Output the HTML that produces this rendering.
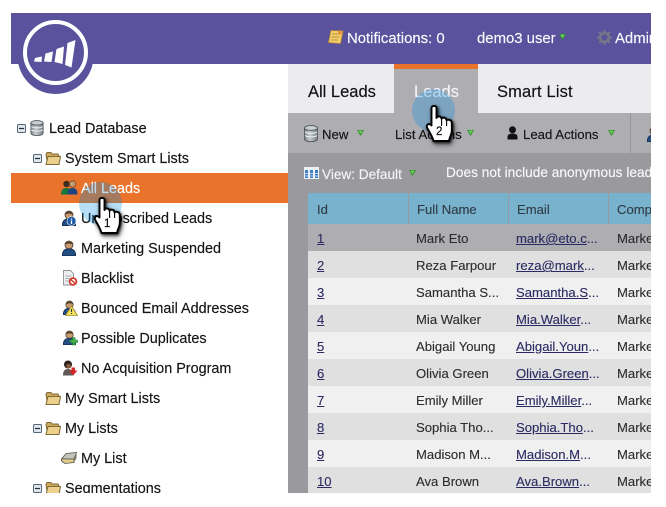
<!DOCTYPE html>
<html><head><meta charset="utf-8"><title>Leads</title>
<style>
html,body{margin:0;padding:0;background:#fff}
body{width:666px;height:507px;overflow:hidden;position:relative;font-family:"Liberation Sans",sans-serif}
#w{position:absolute;left:0;top:0;width:651px;height:493px;overflow:hidden}
.b{position:absolute}
.t{position:absolute;line-height:20px;height:20px;white-space:nowrap;-webkit-text-stroke:.15px currentColor}
.n{font-size:14.4px;color:#141414}
.h{font-size:14.9px;color:#fbfafe}
.tab{font-size:16.5px;color:#111}
.tb{font-size:13.2px;color:#141414}
.r{position:absolute;left:308px;width:343px;height:27px;font-size:13.1px;color:#2c2c2c;-webkit-text-stroke:.12px currentColor}
.r span{position:absolute;top:5px;line-height:20px;white-space:nowrap}
.r .i{left:9px}
.r .f{left:108px}
.r .e{left:208px;color:#2b2a62}
.r .c{left:309px}
.r a{color:#2b2a62;text-decoration:underline}
.th{position:absolute;top:193px;height:31px;background:#78b2cd;font-size:13.1px;color:#2f3a44;line-height:33px;-webkit-text-stroke:.12px currentColor}
svg{position:absolute;overflow:visible}
.hand{filter:drop-shadow(1px 1px 1px rgba(0,0,0,.7)) drop-shadow(1px 2px 2px rgba(0,0,0,.55))}
</style></head><body>
<svg width="0" height="0" style="position:absolute">
<defs>
<linearGradient id="dbg" x1="0" x2="1" y1="0" y2="0"><stop offset="0" stop-color="#7f878c"/><stop offset=".4" stop-color="#c4c9cc"/><stop offset="1" stop-color="#7a8287"/></linearGradient>
<symbol id="db" viewBox="0 0 14 17"><path d="M.5 3v11c0 1.600 2.900 2.600 6.500 2.600s6.500-1 6.500-2.600V3z" fill="url(#dbg)" stroke="#4f585d" stroke-width=".9"/><ellipse cx="7" cy="3" rx="6.500" ry="2.400" fill="#c9ced0" stroke="#4f585d" stroke-width=".9"/><path d="M1 7c2 1.800 10 1.800 12 0M1 10.500c2 1.800 10 1.800 12 0" fill="none" stroke="#f0f3f3" stroke-width="1"/></symbol>
<symbol id="folder" viewBox="0 0 16 16"><path d="M1 4.500 2 2.500h4l1 1.500h6l1 2v8H2.500z" fill="#cfa95a" stroke="#7d6a3c" stroke-width="1"/><path d="M1 14.500 3 6.500h12.500l-1.500 8z" fill="#ecd08c" stroke="#7d6a3c" stroke-width="1"/></symbol>
<symbol id="minus" viewBox="0 0 9 9"><rect x=".5" y=".5" width="8" height="8" rx="1" fill="#dfe6ec" stroke="#56687a"/><path d="M2 4.500h5" stroke="#1e2e3e" stroke-width="1.200"/></symbol>
<symbol id="arrow" viewBox="0 0 7 6"><path d="M0 0h7L3.500 6z" fill="#2f8f2a"/><path d="M1.200 .6h4.600L3.500 4z" fill="#6fd060"/></symbol>
<symbol id="person" viewBox="0 0 14 16"><circle cx="7" cy="5" r="4" fill="#c99a70" stroke="#4d3a2a" stroke-width=".8"/><path d="M3 4.800C3.200.6 10.800.6 11 4.800 8.500 3 5.500 3 3 4.800z" fill="#4f3c2a"/><path d="M.3 15.800c0-4.800 2.600-7 6.700-7s6.700 2.200 6.700 7z" fill="#234f85" stroke="#12294a" stroke-width=".8"/></symbol>
<symbol id="hand" viewBox="-9 -2 30 40"><path d="M-2.500 2C-2.500-.8 2.500-.8 2.500 2V12C3.200 9.800 7 9.800 7.600 12.800 8.300 11 12 11.200 12.600 14.500 13.500 13 17.800 13.600 17.800 17V25C17.800 29 15.500 31 15 35H-.5C-1.500 31-3.500 27.500-6.500 22.500-8.500 19.300-5.500 16.200-2.500 19.500z" fill="#fff" stroke="#000" stroke-width="1.900" stroke-linejoin="round"/><path d="M7.600 13V20M12.600 14.500V20" stroke="#000" stroke-width="1.100" fill="none"/></symbol>
</defs></svg>

<div id="w">
<!-- header -->
<div class="b" style="left:11px;top:13px;width:640px;height:51px;background:#5a529d"></div>
<svg style="left:0;top:0" width="110" height="100" viewBox="0 0 110 100">
<circle cx="55.500" cy="56" r="38" fill="#5a529d"/>
<circle cx="55.500" cy="52.500" r="30.500" fill="#5a529d" stroke="#fff" stroke-width="4"/>
<g fill="#fff"><path d="M35 58 42 56.500 41.500 62 34 61.500z"/><path d="M45.500 53.500 53 51.500 51.500 62 44 61.500z"/><path d="M56.500 49 64 46.500 62.500 64 54.500 62z"/><path d="M67.500 43 75.500 40 71.500 67.500 65 65z"/></g>
</svg>
<svg style="left:328px;top:29px" width="16" height="16" viewBox="0 0 16 16"><path d="M3 1.500 15 2 12.500 14.500 .5 13.500z" fill="#f2cf6c" stroke="#b98a2c" stroke-width=".8"/><path d="M4 5h8M3.500 8h8M3 11h7" stroke="#a9822e" stroke-width=".8"/><circle cx="12" cy="3.500" r="2" fill="#e8913a"/></svg>
<div class="t h" style="left:347px;top:29px">Notifications: 0</div>
<div class="t h" style="left:477px;top:29px">demo3 user</div>
<svg style="left:559px;top:34px" width="7" height="6"><use href="#arrow" width="7" height="6"/></svg>
<svg style="left:597px;top:30px" width="15" height="15" viewBox="0 0 15 15"><circle cx="7.500" cy="7.500" r="4.300" fill="none" stroke="#77748a" stroke-width="2.600"/><path d="M7.500 0v15M0 7.500h15M2.200 2.200 12.800 12.800M12.800 2.200 2.200 12.800" stroke="#77748a" stroke-width="2.200" stroke-dasharray="2.600 9.800"/></svg>
<div class="t h" style="left:615px;top:29px">Admin</div>

<!-- tabs -->
<div class="b" style="left:288px;top:64px;width:363px;height:49px;background:#ecebf0"></div>
<div class="b" style="left:394px;top:64px;width:84px;height:49px;background:#aeadb2"></div>
<div class="b" style="left:394px;top:64px;width:84px;height:5px;background:#e9732a"></div>
<div class="t tab" style="left:308px;top:82px">All Leads</div>
<div class="t tab" style="left:414px;top:82px;color:#f4f4f6">Leads</div>
<div class="t tab" style="left:497px;top:82px;letter-spacing:.15px">Smart List</div>

<!-- toolbar -->
<div class="b" style="left:288px;top:113px;width:363px;height:40px;background:#aeadb2"></div>
<div class="b" style="left:630px;top:113px;width:1px;height:40px;background:#98979c"></div>
<div class="b" style="left:288px;top:153px;width:363px;height:340px;background:#9a999e"></div>
<svg style="left:304px;top:125px" width="14" height="17"><use href="#db" width="14" height="17"/></svg>
<div class="t tb" style="left:322px;top:125px">New</div>
<svg style="left:357px;top:130px" width="7" height="6"><use href="#arrow" width="7" height="6"/></svg>
<div class="t tb" style="left:395px;top:125px">List Actions</div>
<svg style="left:467px;top:130px" width="7" height="6"><use href="#arrow" width="7" height="6"/></svg>
<svg style="left:507px;top:126px" width="11" height="14" viewBox="0 0 11 14"><circle cx="5.500" cy="3.800" r="3.500" fill="#111"/><path d="M.5 13.500v-2.500c0-2.500 2-3.500 5-3.500s5 1 5 3.500v2.500z" fill="#111"/></svg>
<div class="t tb" style="left:523px;top:125px">Lead Actions</div>
<svg style="left:608px;top:130px" width="7" height="6"><use href="#arrow" width="7" height="6"/></svg>
<svg style="left:647px;top:126px" width="14" height="16"><use href="#person" width="14" height="16"/></svg>

<!-- view bar -->
<svg style="left:304px;top:167px" width="15" height="12" viewBox="0 0 15 12"><rect width="15" height="12" fill="#eef2f6"/><path d="M1 3h3v8H1zM6 3h3v8H6zM11 3h3v8h-3z" fill="#3f7fc4"/><path d="M0 6.500h15M0 9h15" stroke="#e8eef4" stroke-width=".7"/></svg>
<div class="t tb" style="left:322px;top:164px;color:#f4f4f6;font-size:13.600px;top:165px">View: Default</div>
<svg style="left:409px;top:170px" width="7" height="6"><use href="#arrow" width="7" height="6"/></svg>
<div class="t tb" style="left:446px;top:163px;color:#f8f8f8;font-size:13.700px">Does not include anonymous leads</div>

<!-- table header -->
<div class="th" style="left:308px;width:100px"><span style="margin-left:9px">Id</span></div>
<div class="th" style="left:409px;width:99px"><span style="margin-left:8px">Full Name</span></div>
<div class="th" style="left:509px;width:99px"><span style="margin-left:8px">Email</span></div>
<div class="th" style="left:609px;width:42px"><span style="margin-left:8px">Company</span></div>

<!-- rows -->
<div class="r" style="top:224px;background:#aeadb2"><span class="i"><a>1</a></span><span class="f">Mark Eto</span><span class="e"><a>mark@eto.c</a>...</span><span class="c">Marketo</span></div>
<div class="r" style="top:251px;background:#e0e0e0"><span class="i"><a>2</a></span><span class="f">Reza Farpour</span><span class="e"><a>reza@mark</a>...</span><span class="c">Marketo</span></div>
<div class="r" style="top:278px;background:#f0f0f0"><span class="i"><a>3</a></span><span class="f">Samantha S...</span><span class="e"><a>Samantha.S</a>...</span><span class="c">Marketo</span></div>
<div class="r" style="top:305px;background:#e0e0e0"><span class="i"><a>4</a></span><span class="f">Mia Walker</span><span class="e"><a>Mia.Walker</a>...</span><span class="c">Marketo</span></div>
<div class="r" style="top:332px;background:#f0f0f0"><span class="i"><a>5</a></span><span class="f">Abigail Young</span><span class="e"><a>Abigail.Youn</a>...</span><span class="c">Marketo</span></div>
<div class="r" style="top:359px;background:#e0e0e0"><span class="i"><a>6</a></span><span class="f">Olivia Green</span><span class="e"><a>Olivia.Green</a>...</span><span class="c">Marketo</span></div>
<div class="r" style="top:386px;background:#f0f0f0"><span class="i"><a>7</a></span><span class="f">Emily Miller</span><span class="e"><a>Emily.Miller</a>...</span><span class="c">Marketo</span></div>
<div class="r" style="top:413px;background:#e0e0e0"><span class="i"><a>8</a></span><span class="f">Sophia Tho...</span><span class="e"><a>Sophia.Tho</a>...</span><span class="c">Marketo</span></div>
<div class="r" style="top:440px;background:#f0f0f0"><span class="i"><a>9</a></span><span class="f">Madison M...</span><span class="e"><a>Madison.M</a>...</span><span class="c">Marketo</span></div>
<div class="r" style="top:467px;background:#e0e0e0"><span class="i"><a>10</a></span><span class="f">Ava Brown</span><span class="e"><a>Ava.Brown</a>...</span><span class="c">Marketo</span></div>

<!-- tree -->
<div class="b" style="left:11px;top:173px;width:277px;height:30px;background:#e9732a"></div>
<svg style="left:17px;top:124px" width="9" height="9"><use href="#minus" width="9" height="9"/></svg>
<svg style="left:30px;top:120px" width="14" height="16"><use href="#db" width="14" height="16"/></svg>
<div class="t n" style="left:49px;top:119px">Lead Database</div>
<svg style="left:33px;top:154px" width="9" height="9"><use href="#minus" width="9" height="9"/></svg>
<svg style="left:45px;top:150px" width="16" height="16"><use href="#folder" width="16" height="16"/></svg>
<div class="t n" style="left:65px;top:149px">System Smart Lists</div>

<svg style="left:61px;top:180px" width="17" height="15" viewBox="0 0 17 15"><circle cx="5.500" cy="4" r="3.200" fill="#3d2c20"/><circle cx="11.500" cy="4" r="3.200" fill="#c99a70" stroke="#4d3a2a" stroke-width=".6"/><path d="M0 14.500c0-5 2.500-6.500 5.500-6.500s5.500 1.500 5.500 6.500z" fill="#14763f"/><path d="M6.500 14.500c0-5 2-6.500 5-6.500s5 1.500 5 6.500z" fill="#1a4580"/></svg>
<div class="t n" style="left:81px;top:179px;color:#fff">All Leads</div>

<svg style="left:62px;top:210px" width="15" height="16" viewBox="0 0 15 16"><use href="#person" width="14" height="16"/><circle cx="9.500" cy="11" r="4.500" fill="#1d5aa8" stroke="#fff" stroke-width=".6"/><path d="M9.500 8.500v1.200M9.500 10.500V14" stroke="#fff" stroke-width="1.300"/></svg>
<div class="t n" style="left:81px;top:209px">Unsubscribed Leads</div>

<svg style="left:62px;top:240px" width="15" height="16"><use href="#person" width="14" height="16"/></svg>
<div class="t n" style="left:81px;top:239px">Marketing Suspended</div>

<svg style="left:63px;top:270px" width="15" height="16" viewBox="0 0 15 16"><path d="M.5.500h7l3 3V15H.5z" fill="#eceef0" stroke="#8e9296" stroke-width=".9"/><path d="M2.500 6h6M2.500 8.500h4M2.500 11h3" stroke="#a8acb0" stroke-width=".9"/><circle cx="10" cy="11.500" r="3.400" fill="#fff" stroke="#d23a2c" stroke-width="1.800"/><path d="M7.800 9.500 12.200 13.500" stroke="#d23a2c" stroke-width="1.500"/></svg>
<div class="t n" style="left:81px;top:269px">Blacklist</div>

<svg style="left:63px;top:300px" width="15" height="16" viewBox="0 0 15 16"><use href="#person" width="13" height="15"/><path d="M8.500 6 14.500 15.500H2.500z" fill="#f5e15c" stroke="#9c8c34" stroke-width=".8"/><path d="M8.500 9v3M8.500 13v1" stroke="#333" stroke-width="1.100"/></svg>
<div class="t n" style="left:81px;top:299px">Bounced Email Addresses</div>

<svg style="left:63px;top:330px" width="15" height="16" viewBox="0 0 15 16"><use href="#person" width="13" height="15"/><path d="M9.500 7.500h2.500v2.500h2.500v2.500H12V15H9.500v-2.500H7V10h2.500z" fill="#3fb54a" stroke="#1e7a2c" stroke-width=".6"/></svg>
<div class="t n" style="left:81px;top:329px">Possible Duplicates</div>

<svg style="left:62px;top:360px" width="16" height="16" viewBox="0 0 16 16"><circle cx="6" cy="4.500" r="4" fill="#2e221d"/><circle cx="6.500" cy="6" r="2.300" fill="#8a5a3c"/><path d="M1 15.500c0-5 2-6.500 5-6.500s5 1.500 5 6.500z" fill="#5f5a58"/><path d="M9.500 7.500h3.500v3h2.500l-4.300 5-4.200-5h2.500z" fill="#d4282a"/></svg>
<div class="t n" style="left:81px;top:359px">No Acquisition Program</div>

<svg style="left:45px;top:390px" width="16" height="16"><use href="#folder" width="16" height="16"/></svg>
<div class="t n" style="left:65px;top:389px">My Smart Lists</div>

<svg style="left:33px;top:424px" width="9" height="9"><use href="#minus" width="9" height="9"/></svg>
<svg style="left:45px;top:420px" width="16" height="16"><use href="#folder" width="16" height="16"/></svg>
<div class="t n" style="left:65px;top:419px">My Lists</div>

<svg style="left:61px;top:452px" width="16" height="12" viewBox="0 0 16 12"><path d="M.5 7 5 1.500 15.500.5 13 7z" fill="#c4c4bc" stroke="#55554c" stroke-width=".8"/><path d="M.5 7H13v3.500L4 11.500.5 9z" fill="#e0cc88" stroke="#55554c" stroke-width=".8"/><path d="M13 7 15.500.5V6l-2.500 4.500z" fill="#76766c"/></svg>
<div class="t n" style="left:81px;top:449px">My List</div>

<svg style="left:33px;top:484px" width="9" height="9"><use href="#minus" width="9" height="9"/></svg>
<svg style="left:45px;top:480px" width="16" height="16"><use href="#folder" width="16" height="16"/></svg>
<div class="t n" style="left:65px;top:479px">Segmentations</div>

<!-- highlights and hands -->
<div class="b" style="left:79px;top:181.500px;width:43px;height:43px;border-radius:50%;background:rgba(0,140,227,.286)"></div>
<div class="b" style="left:411.500px;top:88.500px;width:43px;height:43px;border-radius:50%;background:rgba(0,140,227,.286)"></div>
<svg class="hand" style="left:92.700px;top:196px" width="30" height="40"><use href="#hand" width="30" height="40"/></svg>
<div class="t" style="left:104px;top:214px;font-size:11.500px;color:#000">1</div>
<svg class="hand" style="left:424.700px;top:104px" width="30" height="40"><use href="#hand" width="30" height="40"/></svg>
<div class="t" style="left:436px;top:122px;font-size:11.500px;color:#000">2</div>
</div>
</body></html>
